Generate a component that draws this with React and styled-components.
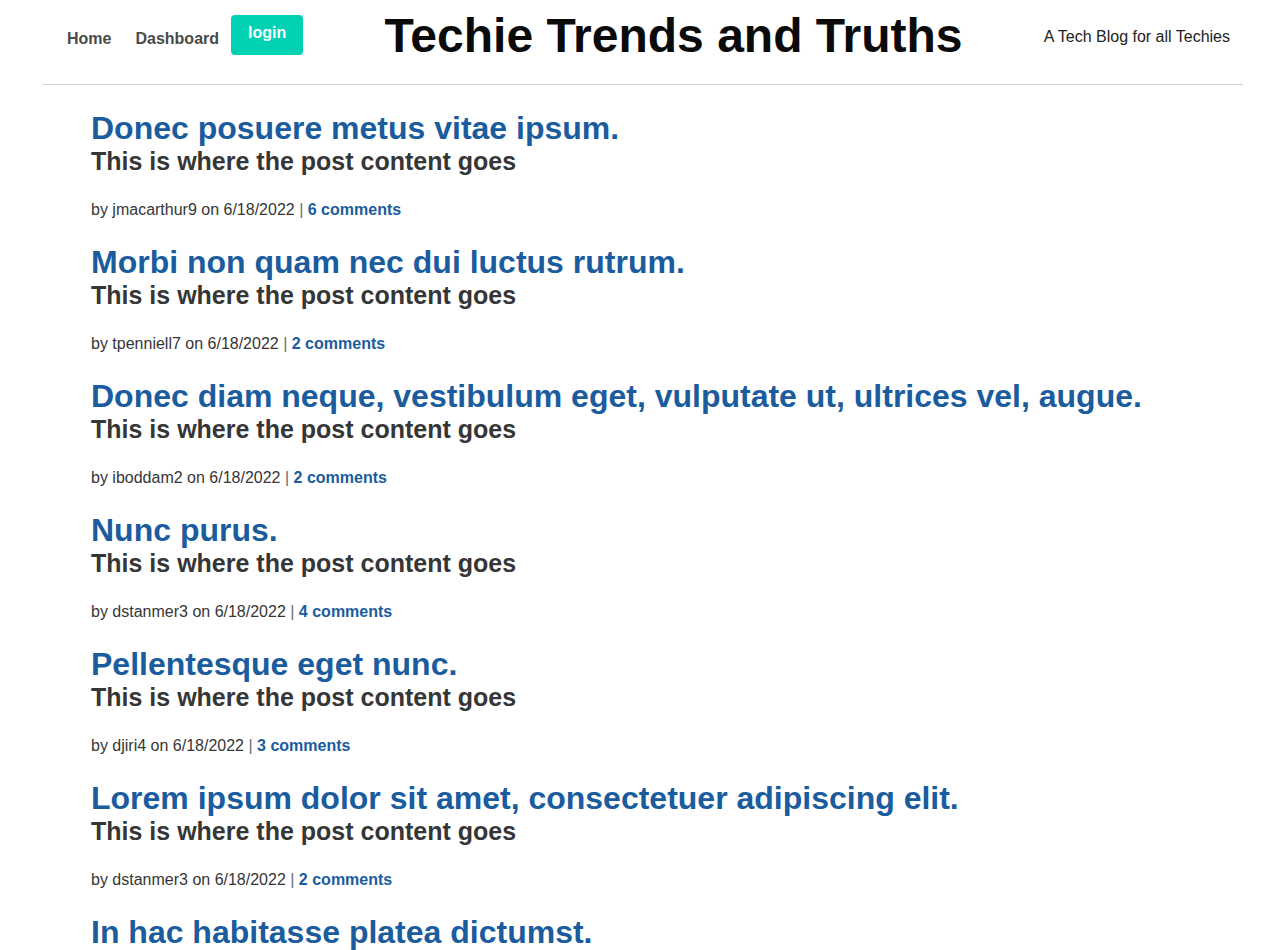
import React from 'react';
import styled, { createGlobalStyle } from 'styled-components';

const GlobalStyle = createGlobalStyle`
  html, body {
    margin: 0;
    padding: 0;
    background: #ffffff;
    font-family: "Liberation Sans", Arial, sans-serif;
    color: #363636;
  }
`;

const Page = styled.div`
  width: 1200px;
  margin-left: 43px;
`;

const Header = styled.header`
  display: flex;
  align-items: flex-start;
  justify-content: space-between;
  height: 85px;
  box-sizing: border-box;
  border-bottom: 1px solid #d0d0d0;
`;

const Nav = styled.nav`
  display: flex;
  align-items: center;
  padding-left: 12px;
  padding-top: 15px;
`;

const NavLink = styled.a`
  font-size: 16px;
  font-weight: 700;
  color: #4a4a4a;
  padding: 0 12px;
  line-height: 24px;
  margin-top: 7px;
  text-decoration: none;
`;

const LoginButton = styled.button`
  background: #00d1b2;
  color: #ffffff;
  border: none;
  border-radius: 4px;
  font-family: inherit;
  font-size: 16px;
  font-weight: 700;
  height: 40px;
  padding: 0 17px 4px;
  cursor: pointer;
`;

const SiteTitle = styled.h1`
  margin: 0;
  padding-top: 8px;
  font-size: 48px;
  line-height: 56px;
  font-weight: 700;
  color: #0a0a0a;
  text-align: center;
  flex: 1;
`;

const Tagline = styled.p`
  margin: 0;
  padding-top: 27px;
  padding-right: 13px;
  font-size: 16px;
  line-height: 20px;
  color: #222222;
`;

const PostList = styled.main`
  padding: 25px 48px 0;
`;

const Post = styled.article`
  margin-bottom: 22px;
`;

const PostTitle = styled.h2`
  margin: 0;
  font-size: 32px;
  line-height: 36px;
  font-weight: 700;
  color: #1a5c9e;
`;

const PostBody = styled.p`
  margin: 0;
  font-size: 25px;
  line-height: 30px;
  font-weight: 700;
  color: #363636;
`;

const Meta = styled.p`
  margin: 22px 0 0;
  font-size: 16px;
  line-height: 24px;
  color: #363636;
`;

const Sep = styled.span`
  color: #6a6a6a;
`;

const Comments = styled.a`
  color: #1a5c9e;
  font-weight: 700;
  text-decoration: none;
`;

const posts = [
  { title: 'Donec posuere metus vitae ipsum.', user: 'jmacarthur9', comments: 6 },
  { title: 'Morbi non quam nec dui luctus rutrum.', user: 'tpenniell7', comments: 2 },
  { title: 'Donec diam neque, vestibulum eget, vulputate ut, ultrices vel, augue.', user: 'iboddam2', comments: 2 },
  { title: 'Nunc purus.', user: 'dstanmer3', comments: 4 },
  { title: 'Pellentesque eget nunc.', user: 'djiri4', comments: 3 },
  { title: 'Lorem ipsum dolor sit amet, consectetuer adipiscing elit.', user: 'dstanmer3', comments: 2 },
  { title: 'In hac habitasse platea dictumst.', user: 'jmacarthur9', comments: 1 },
];

export default function App() {
  return (
    <>
      <GlobalStyle />
      <Page>
        <Header>
          <Nav>
            <NavLink href="#">Home</NavLink>
            <NavLink href="#">Dashboard</NavLink>
            <LoginButton>login</LoginButton>
          </Nav>
          <SiteTitle>Techie Trends and Truths</SiteTitle>
          <Tagline>A Tech Blog for all Techies</Tagline>
        </Header>
        <PostList>
          {posts.map((p, i) => (
            <Post key={i}>
              <PostTitle>{p.title}</PostTitle>
              <PostBody>This is where the post content goes</PostBody>
              <Meta>
                by {p.user} on 6/18/2022 <Sep>|</Sep>{' '}
                <Comments href="#">{p.comments} comments</Comments>
              </Meta>
            </Post>
          ))}
        </PostList>
      </Page>
    </>
  );
}
